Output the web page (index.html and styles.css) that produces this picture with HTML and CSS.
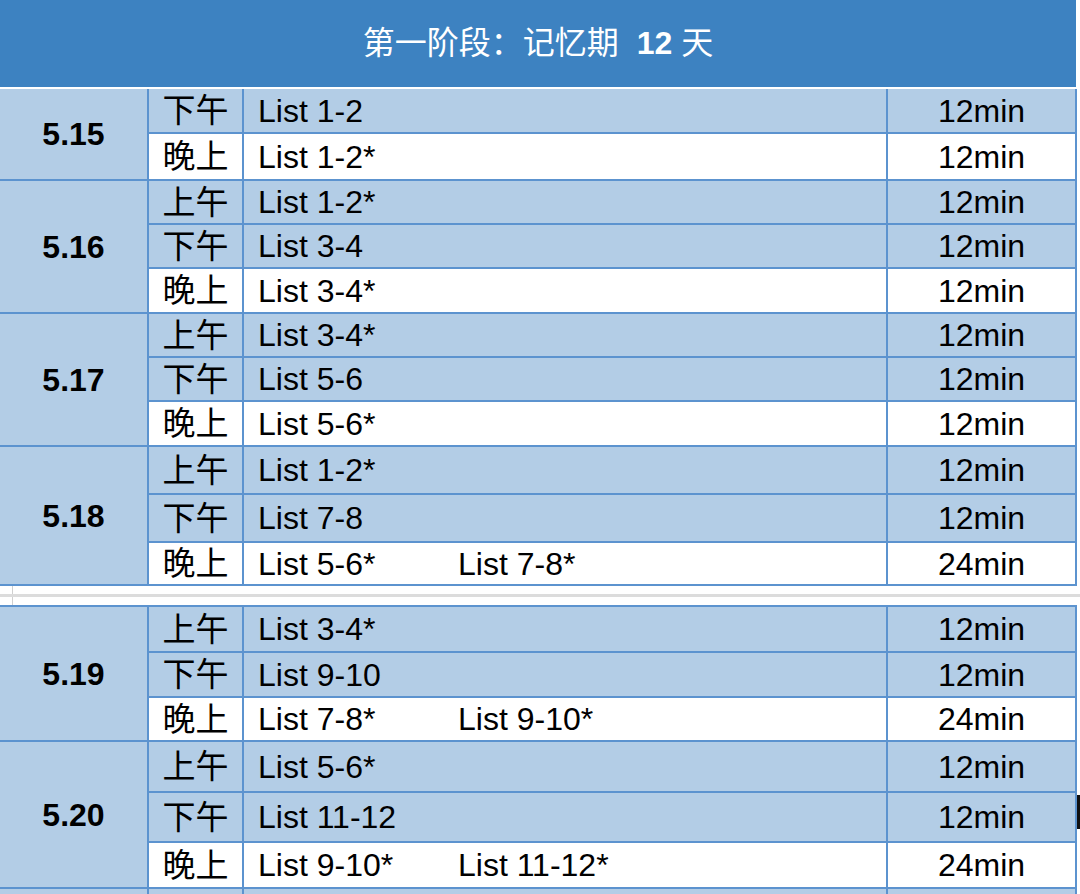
FILE: index.html
```html
<!DOCTYPE html>
<html lang="zh-CN">
<head>
<meta charset="utf-8">
<title>第一阶段：记忆期 12 天</title>
<link rel="stylesheet" href="styles.css">
</head>
<body>
<div class="page">
  <div class="title">第一阶段：记忆期&nbsp; <b>12</b> 天</div>
  <table class="plan plan-first">
    <colgroup><col class="c-date"><col class="c-period"><col class="c-list"><col class="c-time"></colgroup>
    <tbody>
      <tr class="h44"><td class="date" rowspan="2">5.15</td><td class="period">下午</td><td class="list">List 1-2</td><td class="time">12min</td></tr>
      <tr class="h47 eve"><td class="period">晚上</td><td class="list">List 1-2*</td><td class="time">12min</td></tr>

      <tr class="h44"><td class="date" rowspan="3">5.16</td><td class="period">上午</td><td class="list">List 1-2*</td><td class="time">12min</td></tr>
      <tr class="h44"><td class="period">下午</td><td class="list">List 3-4</td><td class="time">12min</td></tr>
      <tr class="h45 eve"><td class="period">晚上</td><td class="list">List 3-4*</td><td class="time">12min</td></tr>

      <tr class="h44"><td class="date" rowspan="3">5.17</td><td class="period">上午</td><td class="list">List 3-4*</td><td class="time">12min</td></tr>
      <tr class="h44"><td class="period">下午</td><td class="list">List 5-6</td><td class="time">12min</td></tr>
      <tr class="h45 eve"><td class="period">晚上</td><td class="list">List 5-6*</td><td class="time">12min</td></tr>

      <tr class="h48"><td class="date" rowspan="3">5.18</td><td class="period">上午</td><td class="list">List 1-2*</td><td class="time">12min</td></tr>
      <tr class="h48"><td class="period">下午</td><td class="list">List 7-8</td><td class="time">12min</td></tr>
      <tr class="h43 eve"><td class="period">晚上</td><td class="list"><span class="item">List 5-6*</span><span class="item">List 7-8*</span></td><td class="time">24min</td></tr>
    </tbody>
  </table>

  <div class="page-break"><span class="break-mark"></span></div>

  <table class="plan plan-second">
    <colgroup><col class="c-date"><col class="c-period"><col class="c-list"><col class="c-time"></colgroup>
    <tbody>
      <tr class="h46"><td class="date" rowspan="3">5.19</td><td class="period">上午</td><td class="list">List 3-4*</td><td class="time">12min</td></tr>
      <tr class="h45"><td class="period">下午</td><td class="list">List 9-10</td><td class="time">12min</td></tr>
      <tr class="h44 eve"><td class="period">晚上</td><td class="list"><span class="item">List 7-8*</span><span class="item">List 9-10*</span></td><td class="time">24min</td></tr>

      <tr class="h51"><td class="date" rowspan="3">5.20</td><td class="period">上午</td><td class="list">List 5-6*</td><td class="time">12min</td></tr>
      <tr class="h50"><td class="period">下午</td><td class="list">List 11-12</td><td class="time">12min</td></tr>
      <tr class="h46 eve"><td class="period">晚上</td><td class="list"><span class="item">List 9-10*</span><span class="item">List 11-12*</span></td><td class="time">24min</td></tr>

      <tr class="h46"><td class="date"></td><td class="period"></td><td class="list"></td><td class="time"></td></tr>
    </tbody>
  </table>
  <span class="cursor"></span>
</div>
</body>
</html>
```

FILE: styles.css
```css
html, body {
  margin: 0;
  padding: 0;
  background: #ffffff;
}

body {
  width: 1080px;
  height: 894px;
  overflow: hidden;
  font-family: "Liberation Sans", Arial, "Noto Sans CJK SC", sans-serif;
  color: #000;
}

.page {
  position: relative;
  width: 1076px;
}

.title {
  height: 87px;
  background: #3d82c1;
  color: #fff;
  font-size: 32px;
  line-height: 87px;
  text-align: center;
  font-family: "Liberation Sans", "Noto Sans CJK SC", sans-serif;
}

.title b {
  font-weight: bold;
}

.plan {
  width: 1076px;
  border-collapse: collapse;
  table-layout: fixed;
  font-size: 32px;
}

.plan-first {
  margin-top: 2px;
}

.c-date { width: 148px; }
.c-period { width: 95px; }
.c-list { width: 644px; }
.c-time { width: 189px; }

.plan td {
  border: 2px solid #5c93cf;
  background: #b3cde6;
  padding: 0;
  vertical-align: middle;
  line-height: 1;
  white-space: nowrap;
}

.plan td:first-child {
  border-left: none;
}

.plan-first tr:first-child td {
  border-top: none;
}

.plan tr.eve td.period,
.plan tr.eve td.list,
.plan tr.eve td.time {
  background: #ffffff;
}

.date {
  text-align: center;
  font-weight: bold;
  font-size: 32px;
}

.period {
  text-align: center;
  font-family: "Noto Sans CJK SC", sans-serif;
  font-size: 33px;
  padding-bottom: 4px !important;
}

.list {
  padding-left: 14px !important;
}

.item {
  display: inline-block;
  width: 200px;
}

.item + .item {
  width: auto;
}

.time {
  text-align: center;
}

.h43 { height: 43px; }
.h44 { height: 44px; }
.h45 { height: 45px; }
.h46 { height: 46px; }
.h47 { height: 47px; }
.h48 { height: 48px; }
.h50 { height: 50px; }
.h51 { height: 51px; }

.page-break {
  position: relative;
  height: 19px;
  box-sizing: border-box;
  width: 1080px;
}

.page-break::after {
  content: "";
  display: block;
  position: absolute;
  left: 0;
  right: 0;
  top: 8px;
  height: 3px;
  background: #dcdcdc;
}

.break-mark {
  position: absolute;
  left: 12px;
  top: 0;
  bottom: 0;
  width: 1px;
  background: #d0d0d0;
}

.cursor {
  position: absolute;
  left: 1077px;
  top: 795px;
  width: 3px;
  height: 34px;
  background: #111;
}
```
